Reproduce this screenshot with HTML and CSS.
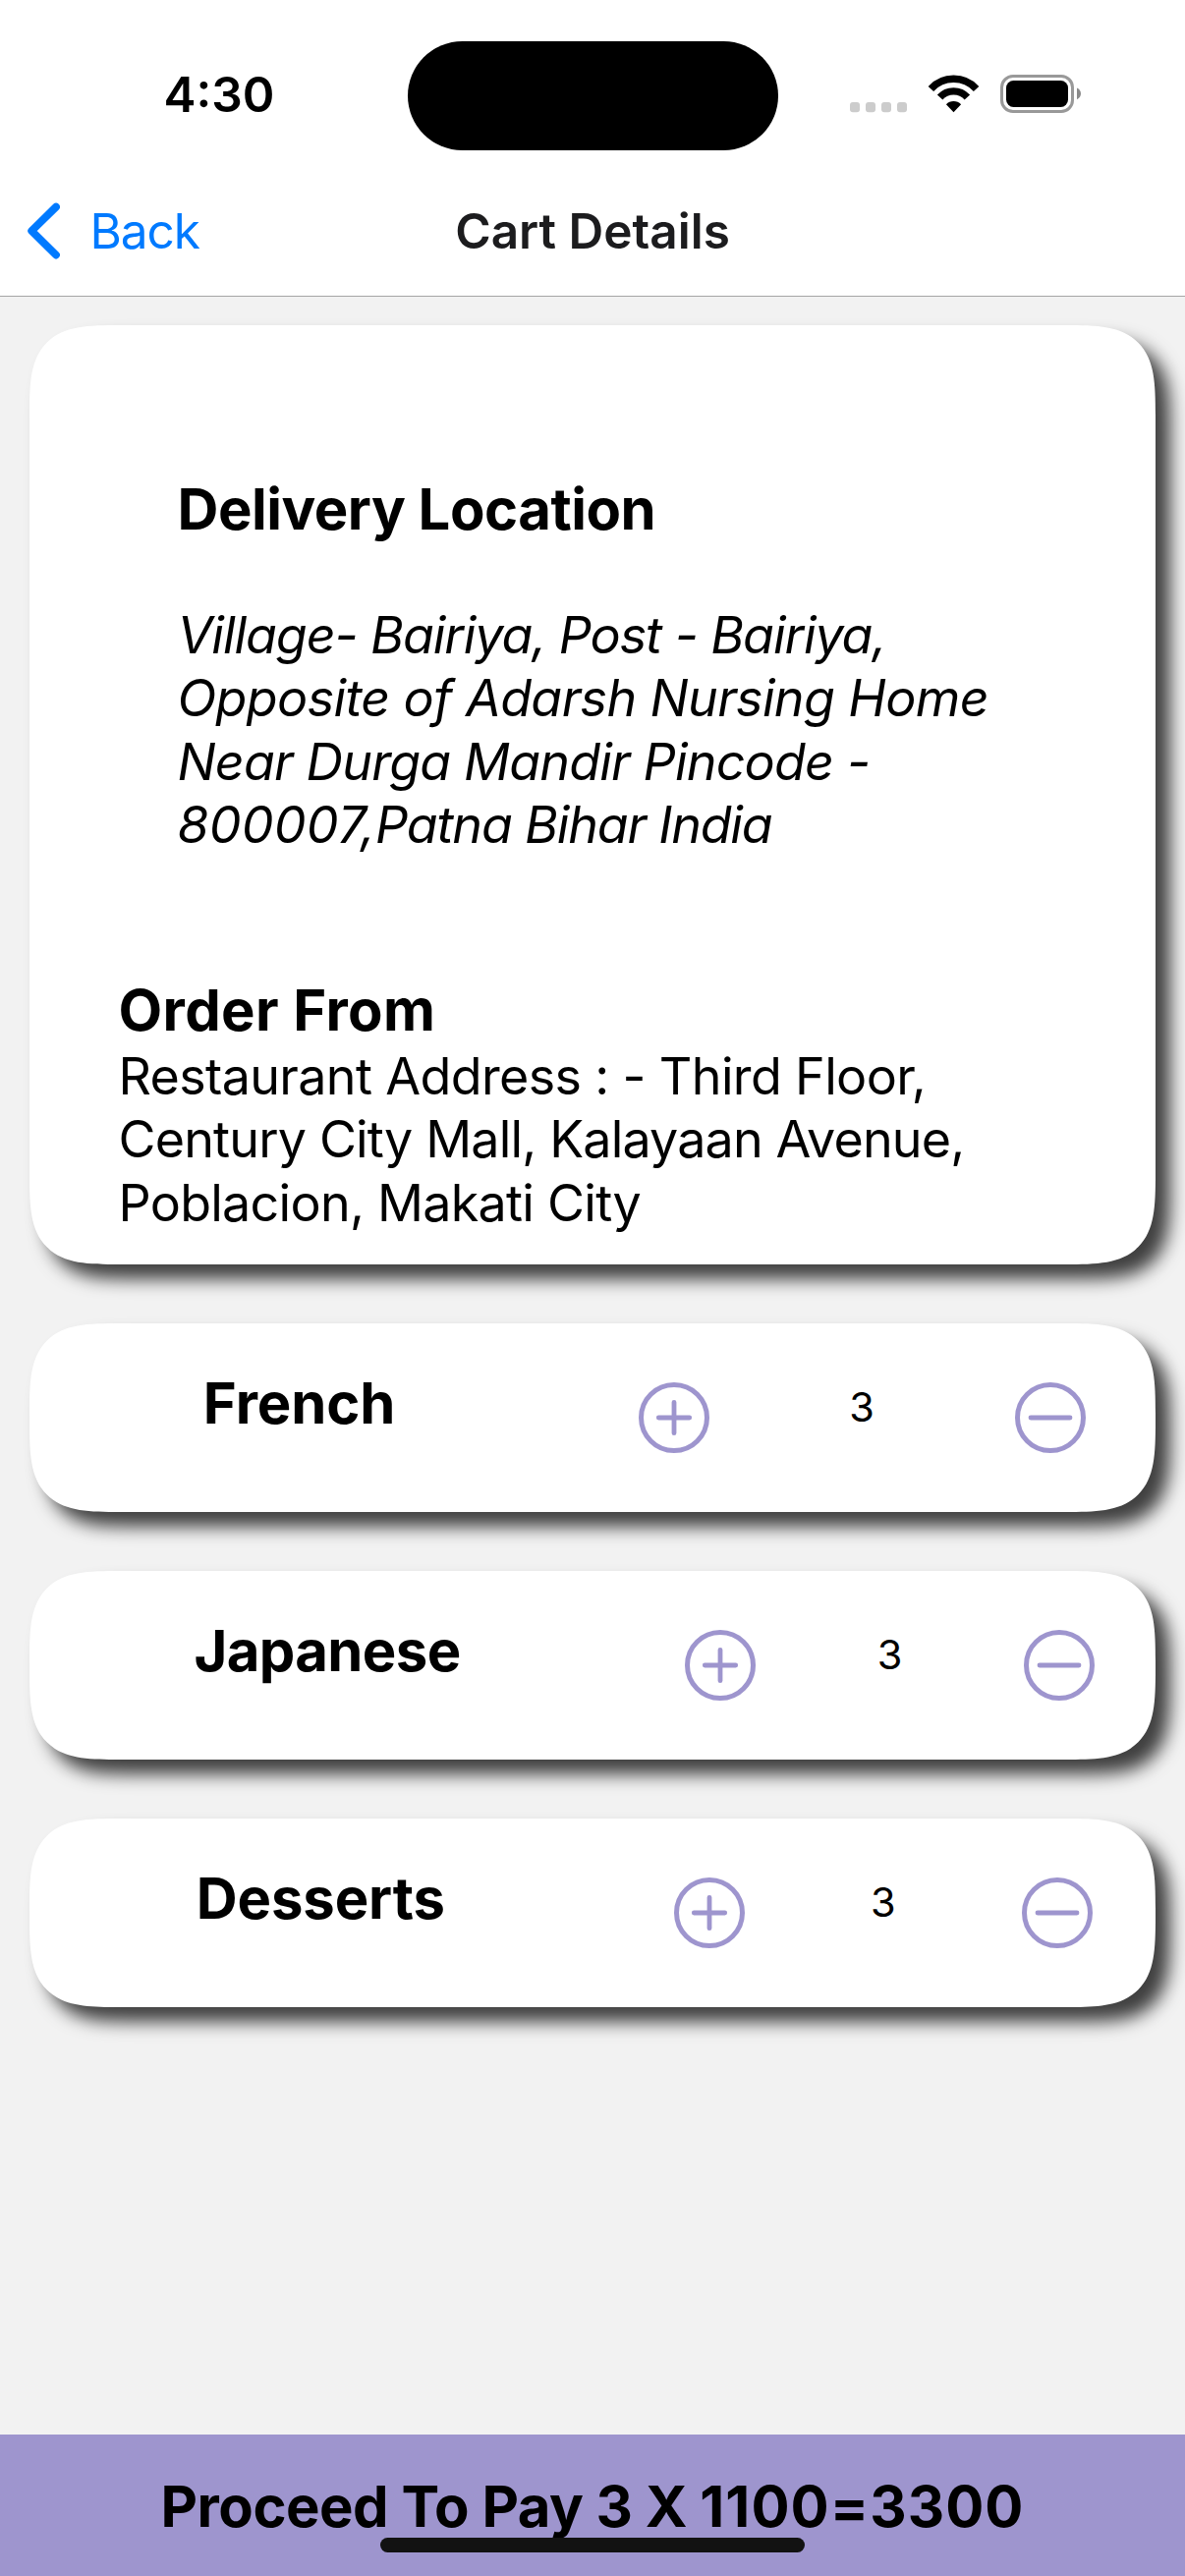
FILE: index.html
```html
<!DOCTYPE html>
<html lang="en">
<head>
<meta charset="utf-8">
<title>Cart Details</title>
<link rel="stylesheet" href="styles.css">
</head>
<body>
<svg class="defs" aria-hidden="true">
  <symbol id="plus" viewBox="0 0 72 72">
    <circle cx="36" cy="36" r="33.5" fill="none" stroke="currentColor" stroke-width="5"/>
    <path d="M20.3 36h31.4M36 20.3v31.4" stroke="currentColor" stroke-width="4.8" stroke-linecap="round"/>
  </symbol>
  <symbol id="minus" viewBox="0 0 72 72">
    <circle cx="36" cy="36" r="33.5" fill="none" stroke="currentColor" stroke-width="5"/>
    <path d="M16 36h40" stroke="currentColor" stroke-width="4.8" stroke-linecap="round"/>
  </symbol>
</svg>
<div class="screen">
  <header class="header">
    <div class="status">
      <span class="time">4:30</span>
      <span class="island"></span>
      <svg class="indicators" width="236" height="39" viewBox="0 0 236 39">
        <g fill="#cccccc">
          <rect x="0" y="28" width="10" height="10.3" rx="3"/>
          <rect x="16" y="28" width="10" height="10.3" rx="3"/>
          <rect x="32" y="28" width="10" height="10.3" rx="3"/>
          <rect x="48" y="28" width="10" height="10.3" rx="3"/>
        </g>
        <g transform="translate(105.5 35.7)">
          <path d="M-23.1 -21.2A31.3 31.3 0 0 1 23.1 -21.2M-13.9 -12.7A18.8 18.8 0 0 1 13.9 -12.7" fill="none" stroke="#000" stroke-width="7.4"/>
          <path d="M0 2.5L-7.6 -5.4A10.6 10.6 0 0 1 7.6 -5.4Z"/>
        </g>
        <rect x="154.5" y="1.5" width="72" height="36" rx="11.5" fill="none" stroke="#999" stroke-width="3"/>
        <rect x="159" y="6" width="63" height="27" rx="7.5"/>
        <path d="M231 13.5Q235 15.5 235 19.3T231 25.2Z" fill="#8a8a8a"/>
      </svg>
    </div>
    <nav class="nav">
      <a class="back">
        <svg width="35" height="60" viewBox="0 0 35 60"><path d="M31 5.6L6.2 30L31 54.5" fill="none" stroke="currentColor" stroke-width="7.8" stroke-linecap="round" stroke-linejoin="round"/></svg>
        <span>Back</span>
      </a>
      <h1 class="title">Cart Details</h1>
    </nav>
  </header>

  <main class="content">
    <section class="card address">
      <div class="delivery">
        <h2 class="heading tight">Delivery Location</h2>
        <p class="text italic"><span class="l1">Village- Bairiya, Post - Bairiya,</span><br><span class="l2">Opposite of Adarsh Nursing Home</span><br><span class="l3">Near Durga Mandir Pincode -</span><br><span class="pin">800007,</span><span class="l5">Patna Bihar India</span></p>
      </div>
      <div class="order">
        <h2 class="heading wide">Order From</h2>
        <p class="text"><span class="l2">Restaurant Address : - Third Floor,</span><br><span class="l3">Century City Mall, Kalayaan Avenue,</span><br><span class="l4">Poblacion, Makati City</span></p>
      </div>
    </section>

    <section class="card item">
      <h2 class="heading name">French</h2>
      <svg class="icon"><use href="#plus"/></svg>
      <span class="count">3</span>
      <svg class="icon"><use href="#minus"/></svg>
    </section>
    <section class="card item">
      <h2 class="heading name narrow">Japanese</h2>
      <svg class="icon"><use href="#plus"/></svg>
      <span class="count">3</span>
      <svg class="icon"><use href="#minus"/></svg>
    </section>
    <section class="card item">
      <h2 class="heading name">Desserts</h2>
      <svg class="icon"><use href="#plus"/></svg>
      <span class="count">3</span>
      <svg class="icon"><use href="#minus"/></svg>
    </section>
  </main>

  <footer class="pay">
    <span class="heading">Proceed To Pay 3 X <span class="sum">1100=3300</span></span>
    <span class="home-bar"></span>
  </footer>
</div>
</body>
</html>
```
FILE: styles.css
```css
* { box-sizing: border-box; }
body {
  margin: 0;
  background: #f2f2f2;
  color: #000;
  font-family: Inter, "Liberation Sans", sans-serif;
}
.defs { display: none; }
h1, h2, p { margin: 0; }
.screen {
  width: 1206px;
  height: 2622px;
  display: flex;
  flex-direction: column;
  overflow: hidden;
}

/* Status bar and navigation */
.header { background: #fff; border-bottom: 1px solid #a6a6a6; }
.status {
  height: 169px;
  padding: 25px 0 0 166.5px;
  display: flex;
  align-items: center;
}
.time {
  width: 248px;
  padding-bottom: 2px;
  font-size: 49.5px;
  font-weight: 600;
  line-height: 60px;
}
.island {
  width: 377px;
  height: 111px;
  border-radius: 56px;
  background: #000;
}
.indicators { margin: 0 0 3px 73.5px; }
.nav {
  height: 132px;
  padding: 0 26px;
  display: grid;
  grid-template-columns: 1fr auto 1fr;
  align-items: center;
  font-size: 49.5px;
  line-height: 60px;
}
.back {
  display: flex;
  align-items: center;
  gap: 30.5px;
  color: #007aff;
  letter-spacing: -1.1px;
}
.title {
  font-size: inherit;
  font-weight: 600;
  color: #1c1c1e;
}

/* Cards */
.content {
  flex: 1;
  padding: 29px 30px 0;
  display: flex;
  flex-direction: column;
  gap: 60px;
}
.card {
  background: #fff;
  border-radius: 60px;
  box-shadow: 15px 15px 18px rgba(0, 0, 0, 0.74);
}
@supports (corner-shape: superellipse(1.7)) {
  .card { border-radius: 92px; corner-shape: superellipse(1.7); }
}
.heading {
  font-size: 58px;
  font-weight: 700;
  line-height: 70px;
  white-space: nowrap;
}
.text {
  font-size: 52px;
  line-height: 64.3px;
  white-space: nowrap;
}
.italic { font-style: italic; }
.tight { letter-spacing: -0.47px; }
.wide { letter-spacing: 0.38px; }
.l1 { letter-spacing: -1.06px; }
.l2 { letter-spacing: -0.64px; }
.l3 { letter-spacing: -0.83px; }
.l4 { letter-spacing: -0.73px; }
.l5 { letter-spacing: -1.2px; }
.pin { letter-spacing: 0.2px; }

.address { height: 956px; padding: 152px 90.5px 0; }
.delivery { padding-left: 60px; }
.delivery .text { margin-top: 62px; }
.order { margin-top: 120.5px; }
.order .text { margin-top: 1.5px; }

.item {
  height: 192px;
  display: flex;
  justify-content: space-around;
  align-items: flex-start;
}
.name { margin: 46px 104.5px 0 105.5px; letter-spacing: -0.1px; }
.narrow { letter-spacing: -0.6px; }
.icon {
  width: 72px;
  height: 72px;
  margin-top: 60px;
  color: #9e95ce;
}
.count {
  margin-top: 60px;
  font-size: 41.5px;
  line-height: 50px;
}

/* Payment bar */
.pay {
  position: relative;
  height: 144px;
  padding-top: 37.5px;
  background: #9e95ce;
  text-align: center;
}
.pay .heading { display: block; letter-spacing: -0.5px; }
.pay .sum { letter-spacing: 1.05px; }
.home-bar {
  position: absolute;
  left: 387px;
  bottom: 24px;
  width: 432px;
  height: 15px;
  border-radius: 8px;
  background: #121212;
}
```
